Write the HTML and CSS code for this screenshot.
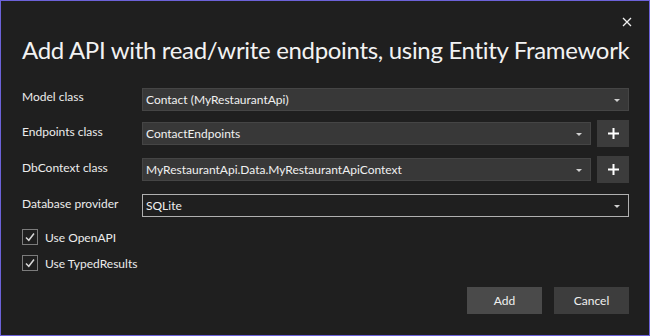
FILE: index.html
```html
<!DOCTYPE html>
<html lang="en">
<head>
  <meta charset="UTF-8">
  <title>Add API with read/write endpoints</title>
  <link rel="stylesheet" href="styles.css">
</head>
<body>

  <div class="dialog">
    <div class="title-bar">
      <button class="close-button" aria-label="Close">
        <svg width="10" height="10" viewBox="0 0 10 10">
          <path d="M1 1 L9 9 M9 1 L1 9" stroke="#f0f0f0" stroke-width="1.3" fill="none"/>
        </svg>
      </button>
    </div>

    <h1>Add API with read/write endpoints, using Entity Framework</h1>

    <div class="form">
      <div class="row row-first">
        <label>Model class</label>
        <div class="combo">
          <span>Contact (MyRestaurantApi)</span>
          <i class="arrow"></i>
        </div>
      </div>

      <div class="row">
        <label>Endpoints class</label>
        <div class="combo">
          <span>ContactEndpoints</span>
          <i class="arrow"></i>
        </div>
        <button class="add-button" aria-label="Add">
          <svg width="11" height="11" viewBox="0 0 11 11">
            <path d="M5.5 0 V11 M0 5.5 H11" stroke="#fff" stroke-width="2" fill="none"/>
          </svg>
        </button>
      </div>

      <div class="row">
        <label>DbContext class</label>
        <div class="combo">
          <span>MyRestaurantApi.Data.MyRestaurantApiContext</span>
          <i class="arrow"></i>
        </div>
        <button class="add-button" aria-label="Add">
          <svg width="11" height="11" viewBox="0 0 11 11">
            <path d="M5.5 0 V11 M0 5.5 H11" stroke="#fff" stroke-width="2" fill="none"/>
          </svg>
        </button>
      </div>

      <div class="row">
        <label>Database provider</label>
        <div class="combo combo-focused">
          <span>SQLite</span>
          <i class="arrow"></i>
        </div>
      </div>
    </div>

    <div class="options">
      <label class="check">
        <span class="box">
          <svg width="12" height="12" viewBox="0 0 12 12">
            <path d="M2 6.5 L4.8 9.3 L10 2.5" stroke="#d8d8d8" stroke-width="1.5" fill="none"/>
          </svg>
        </span>
        Use OpenAPI
      </label>
      <label class="check">
        <span class="box">
          <svg width="12" height="12" viewBox="0 0 12 12">
            <path d="M2 6.5 L4.8 9.3 L10 2.5" stroke="#d8d8d8" stroke-width="1.5" fill="none"/>
          </svg>
        </span>
        Use TypedResults
      </label>
    </div>

    <div class="actions">
      <button class="btn btn-primary">Add</button>
      <button class="btn">Cancel</button>
    </div>
  </div>

</body>
</html>
```

FILE: styles.css
```css
/* Page */
body {
  margin: 0;
  background: #1f1f1f;
  font-family: Lato, 'Noto Sans', sans-serif;
  color: #f0f0f0;
}

/* Dialog window */
.dialog {
  box-sizing: border-box;
  width: 650px;
  height: 336px;
  border: 1px solid #6c62d9;
  background: #1f1f1f;
  padding: 0 20px 0 21px;
  display: flex;
  flex-direction: column;
}

.title-bar {
  display: flex;
  justify-content: flex-end;
  height: 30px;
}

.close-button {
  background: none;
  border: none;
  padding: 0;
  margin: 14px -6px 0 0;
  width: 16px;
  height: 12px;
  cursor: pointer;
}

h1 {
  margin: 2px 0 0 0;
  font-weight: 400;
  font-size: 24px;
  letter-spacing: -0.32px;
  line-height: 34px;
  color: #f2f2f2;
  white-space: nowrap;
}

/* Form rows */
.form {
  margin-top: 19px;
}

.row {
  display: flex;
  align-items: center;
  height: 27px;
  margin-bottom: 9px;
}

.row-first {
  margin-bottom: 7px;
}

.row label {
  width: 120px;
  flex-shrink: 0;
  font-size: 12px;
  color: #ececec;
  margin-top: -4px;
}

.row-first label {
  margin-top: -6px;
}

.combo {
  box-sizing: border-box;
  flex: 1;
  height: 23px;
  background: #383838;
  border: 1px solid #454545;
  display: flex;
  align-items: center;
  justify-content: space-between;
  padding: 0 8px 0 3px;
  font-size: 12px;
  color: #f0f0f0;
}

.combo-focused {
  background: #1f1f1f;
  border-color: #b0b0b0;
}

.arrow {
  width: 0;
  height: 0;
  border-left: 3px solid transparent;
  border-right: 3px solid transparent;
  border-top: 3px solid #d0d0d0;
  margin-top: 2px;
}

.add-button {
  width: 32px;
  height: 27px;
  margin-left: 6px;
  background: #3c3c3c;
  border: none;
  padding: 0;
  display: flex;
  align-items: center;
  justify-content: center;
  cursor: pointer;
}

/* Checkboxes */
.options {
  margin-top: 1px;
  display: flex;
  flex-direction: column;
  gap: 10px;
}

.check {
  display: flex;
  align-items: center;
  gap: 7px;
  font-size: 12px;
  color: #ececec;
  height: 16px;
}

.box {
  box-sizing: border-box;
  width: 16px;
  height: 16px;
  border: 1px solid #7c7c7c;
  display: flex;
  align-items: center;
  justify-content: center;
}

/* Footer buttons */
.actions {
  margin-top: auto;
  margin-bottom: 21px;
  display: flex;
  justify-content: flex-end;
  gap: 12px;
}

.btn {
  width: 75px;
  height: 27px;
  border: none;
  background: #3d3d3d;
  color: #f0f0f0;
  font-family: inherit;
  font-size: 12px;
  cursor: pointer;
}

.btn-primary {
  background: #4a4a4a;
}
```
